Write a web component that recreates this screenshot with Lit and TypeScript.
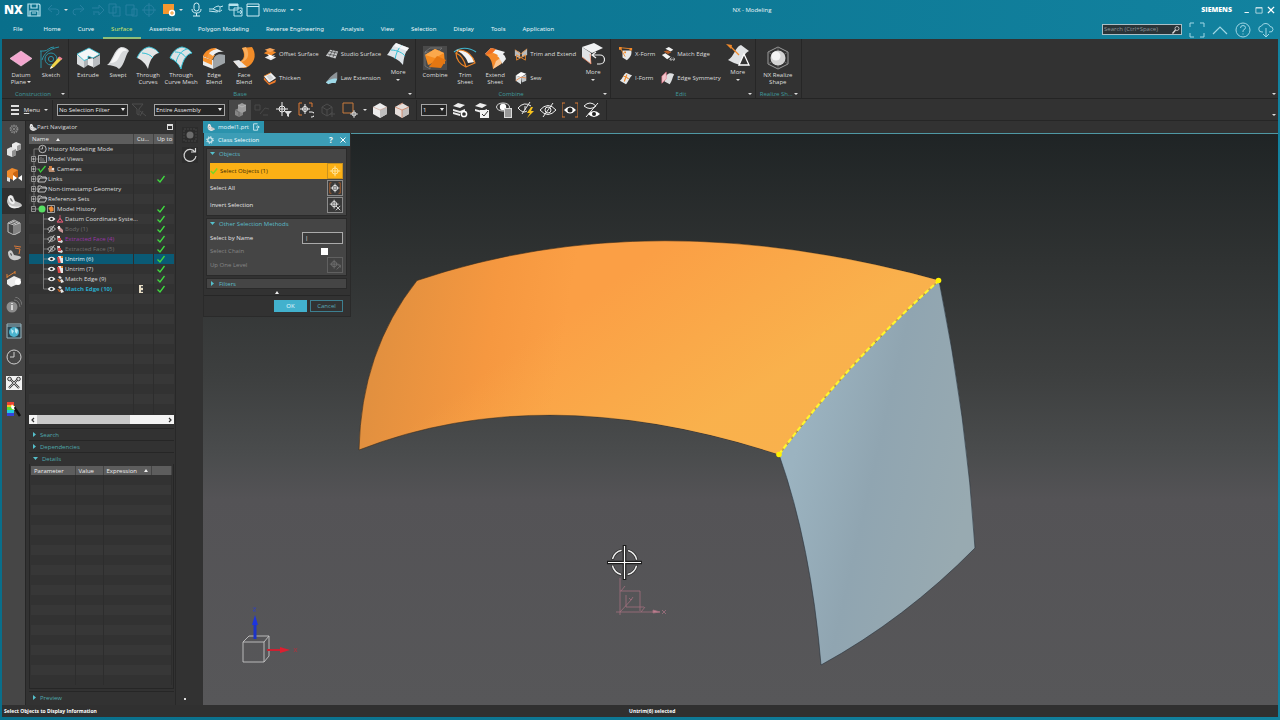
import { LitElement, html, svg, css, nothing, type SVGTemplateResult } from "lit";
import { customElement } from "lit/decorators.js";
import { classMap } from "lit/directives/class-map.js";

type Art = SVGTemplateResult;

const ART: Record<string, Art> = {
  // ---- ribbon, large (24 x 24)
  datum: svg`<path d="M1 12.500 12 5l11 7.500L12 20z" fill="#f3a6cf" stroke="#fbd3e8" stroke-width=".6"/>`,
  sketch: svg`<g fill="none" stroke="#2b93a6" stroke-width="1"><path d="M2 22V5M1 5h4c4 0 5-4 10-4M3 14C5 8 9 3 20 1"/><circle cx="12" cy="13" r="6"/><circle cx="12" cy="13" r="2.600"/></g><path d="m11 23 2-4 7-8 3 2-8 8z" fill="#f2d548"/><path d="m19 12 1.500-1.500 3 2L22 14z" fill="#ef7f9a"/><path d="m11 23 1-3 2 1.500z" fill="#fff"/>`,
  extrude: svg`<path d="M1 8v10l7 4V14z" fill="#d9dcde"/><path d="M8 14v8l4-3v-6z" fill="#aeb3b7"/><path d="M12 13v6l5 2v-9z" fill="#eceeef"/><path d="m17 13 7-4v9l-7 4z" fill="#b9bdc1"/><path d="m1 8 12-6 11 6-7 4-5-2v3l-4 1.500z" fill="#f4f6f7" stroke="#35bfd3" stroke-width=".8"/>`,
  swept: svg`<path d="M1 19C6 16 8 3 15 1c4 0 7 2 8 4-4 4-4 14-10 18-3-3-8-4-12-4z" fill="#d6d8da"/><path d="M4 17C8 13 10 4 15 2c3 0 5 1 6 3-3-1-5 0-7 4-2 5-4 8-10 8z" fill="#f6f6f6"/>`,
  through: svg`<path d="M1 12C4 5 8 2 13 1c4 1 7 2 10 6-5 1-9 6-11 16-2-5-6-9-11-11z" fill="#e3e5e6"/><path d="M1 12C4 5 8 2 13 1c4 1 7 2 10 6M6 7c4 0 9 2 11 5" fill="none" stroke="#35bfd3" stroke-width="1"/>`,
  mesh: svg`<path d="M1 12C4 5 8 2 13 1c4 1 7 2 10 6-5 1-9 6-11 16-2-5-6-9-11-11z" fill="#dde2e4"/><path d="M1 12C4 5 8 2 13 1c4 1 7 2 10 6-5 1-9 6-11 16-2-5-6-9-11-11zM6 6c5 0 9 2 11 6M18 3C12 5 9 9 7 16" fill="none" stroke="#35bfd3" stroke-width="1"/>`,
  edgeblend: svg`<path d="M1 10v9l10 4v-9z" fill="#e9ebec"/><path d="M11 23v-8c1-6 5-8 12-6v8z" fill="#9ea4a8"/><path d="m1 10 4-4 8 3-3 5z" fill="#f79a3c"/><path d="M5 6 13 2l9 4c-5-1-9 1-11 4z" fill="#eef0f1"/><path d="M1 10c2-5 7-8 12-8l2 1C10 4 7 6 5 11z" fill="#f58a25"/><path d="M1 11v4l9 4v-5z" fill="#f7932f"/>`,
  faceblend: svg`<path d="M10 2 20 1c4 6 4 14-3 19-4 3-10 3-15-4 8 1 13-4 8-14z" fill="#f28c28"/><path d="m1 15 6-1 8 7-8 1z" fill="#e5e7e9"/><path d="m10 2 4-1c5 8 1 15-6 15 6-3 6-8 2-14z" fill="#f9ad5c"/>`,
  moresurf: svg`<path d="M1 13C5 8 7 3 10 1l13 5c-4 4-5 9-6 17-4-5-9-8-16-10z" fill="#dde4e9"/><path d="M5 8c6 0 12 3 14 6M16 3c-4 3-6 9-7 14" fill="none" stroke="#35bfd3" stroke-width="1"/><path d="m10 1 13 5-2 3-13-5z" fill="#fff" opacity=".7"/>`,
  combine: svg`<path d="M2 6 7 2h12l-4 4zM2 6v14l5 3V9z" fill="none" stroke="#8a8a8a" stroke-width=".6"/><path d="M2 9 12 3l9 4 1 11-8-3-9 4z" fill="#f68b1f"/><path d="m2 9 10-6 9 4-9 5z" fill="#fba84c"/><path d="m14 10 9 4-5 8-12-1z" fill="#e57712"/>`,
  trim: svg`<path d="M1 6C7 1 16 1 23 6" fill="none" stroke="#3fb6cf" stroke-width="1.200"/><path d="M3 4C11 3 19 8 22 16l-7 1C13 11 9 7 3 4z" fill="#f4f5f5"/><path d="M3 7c5 2 8 6 10 14l9-4c-2-7-8-13-16-13zM3 7c0 6 4 12 10 14" fill="none" stroke="#e98226" stroke-width="1.200"/>`,
  extend: svg`<path d="M2 8 8 2l14 4-6 6z" fill="#f2f3f4"/><path d="m8 2 5 1-6 7-5-2z" fill="#f07022"/><path d="M2 9c5 1 7 6 8 14l9-6c-1-6-4-9-9-10z" fill="#f58a2b"/><path d="m10 23 3-8 6-4-1 7z" fill="#fbc691"/><path d="M14 10c2 1 4 4 5 8l4-5c-1-4-3-5-5-6z" fill="#eceeef"/>`,
  morecomb: svg`<path d="m1 5 12-4 9 5-11 5z" fill="#f0f1f2"/><path d="M1 5v10l9 7V11z" fill="#dfe2e4"/><path d="M1 15 10 22 9 12" fill="none" stroke="#f08b66" stroke-width=".8"/><path d="M12 13h7a4 4 0 0 1 0 9h-3M15 10l-4 3 4 3" fill="none" stroke="#eee" stroke-width="1.200"/>`,
  moreedit: svg`<path d="M2 18C8 15 9 5 15 3l8 6c-5 2-6 9-9 14-4-1-8-3-12-5z" fill="#dfe1e3"/><path d="m0 2 6 1-1 4z" fill="#f28a2a"/><path d="m4 4 9 9" stroke="#f28a2a" stroke-width="1.200"/><path d="m18 12-5 11h10z" fill="#333" stroke="#fff" stroke-width="1.300"/>`,
  realize: svg`<path d="M12 1 22 6v12l-10 5L2 18V6z" fill="none" stroke="#9a9a9a" stroke-width="1"/><path d="M12 1v22M2 6l20 12M22 6 2 18" stroke="#777" stroke-width=".7"/><circle cx="12" cy="12" r="7.500" fill="#d3d3d3"/><circle cx="10" cy="10" r="4.500" fill="#f4f4f4"/>`,
  // ---- ribbon, small (16 x 16)
  offset: svg`<path d="m2 12 6-3 7 3-6 3z" fill="#e6e8ea"/><path d="m1 7 6-4 8 3-6 4z" fill="#f28a2a"/><path d="m2 3 6-2 6 2-6 3z" fill="#f7a45a"/><path d="m5 8 6 2 3-1-5 4z" fill="#fff"/>`,
  thicken: svg`<path d="m1 7 6 7 8-4-1 3-7 3-6-6z" fill="#f07b2a"/><path d="m1 6 8-4 6 6-8 5z" fill="#f1f2f3"/><path d="m4 6 4-2 4 4-4 3z" fill="#d0d3d5"/><path d="m1 6 8-4" stroke="#f28a2a"/>`,
  studio: svg`<path d="M1 10 6 3l9 2-3 8z" fill="#c9cbcd"/><path d="m3 8 10 2M5 5l9 2M9 3l-4 8M12 4 9 12" stroke="#444" stroke-width=".8"/>`,
  law: svg`<path d="M14 1v8c-3 0-7 1-11 5l-2-1C4 9 9 3 14 1z" fill="#8d9397"/><path d="M1 13c5-4 9-5 13-4l-2 5c-3-1-6 0-8 1z" fill="#9fd9e8"/>`,
  trimext: svg`<path d="m1 3 6 3v7L1 10zM15 2 9 6v6l6-3z" fill="#b9bcbf"/><path d="M3 9v6l5-3 5 3V9L8 12z" fill="none" stroke="#f28a2a" stroke-width="1"/><path d="m1 3 7 5 7-6" fill="none" stroke="#f28a2a" stroke-width=".8"/>`,
  sew: svg`<path d="m2 5 6-4 6 2-6 4z" fill="#fff"/><path d="m2 5 6 2v8l-6-4z" fill="#dcdfe1"/><path d="m8 7 6-3v7l-5 2z" fill="#bfc4c7"/><path d="m2 11 6-4 6 1" fill="none" stroke="#f08b4a"/>`,
  xform: svg`<path d="M4 4 14 4c1 4-1 8-5 11L4 12z" fill="#e6e7e8"/><path d="M1 1h3l9 1M2 2l5 9" stroke="#f28a2a" fill="none"/><path d="M0 0h3v3H0zM12 1h3v3h-3zM6 5h2v2H6z" fill="#f28a2a"/>`,
  iform: svg`<path d="M1 11C4 9 5 4 8 2l7 3c-3 2-4 7-7 10z" fill="#e6e7e8"/><path d="M5 6c3 0 4 1 6 3M9 4 6 12" stroke="#f28a2a" stroke-width="1.300" fill="none"/>`,
  matchedge: svg`<path d="m5 2 4-2 5 3-3 2zM1 9l4-2 6 4-4 3z" fill="#f3f4f4"/><path d="m3 5 4-1 5 2-4 2z" fill="#b9612a"/><path d="M10 14h6M12 12l-2 2 2 2M14 12l2 2-2 2" stroke="#ddd" fill="none" stroke-width=".8"/>`,
  symmetry: svg`<path d="M6 5c3-3 6-3 9-1-2 3-2 7-5 11L4 12z" fill="#dcdedf"/><path d="M1 6 6 1v8l-5 5z" fill="#f2c5cb" stroke="#e8748a" stroke-width=".7"/>`,
  // ---- selection bar (16 x 16)
  filter: svg`<path d="M1 2h11L8 7v6L6 12V7zM9 9l6 5M12 9l-3 5" fill="none" stroke="#4d4d4d"/>`,
  bodies: svg`<path d="m3 8 4-2 4 2v5l-4 2-4-2z" fill="#858585"/><path d="m3 8 4 2 4-2M7 10v5" fill="none" stroke="#6a6a6a"/><path d="m6 3 4-2 4 2v6l-4 2-4-2z" fill="#9d9d9d"/><path d="m6 3 4 2 4-2" fill="none" stroke="#b5b5b5"/>`,
  dimlink: svg`<path d="M1 3h5v5H1zM6 12l5-6 4 1M9 13h5" fill="none" stroke="#484848"/>`,
  snap: svg`<circle cx="6" cy="7" r="3" fill="none" stroke="#eee"/><path d="M6 0v14M0 7h12" stroke="#eee"/><path d="M8 9h8l-3 3v3l-2-1v-2z" fill="#ddd"/>`,
  snaparea: svg`<path d="M4 1H1v12h3M11 1h3v4" stroke="#e07b35" fill="none"/><circle cx="7" cy="7" r="2.500" fill="none" stroke="#eee"/><path d="M7 2v10M2 7h10M11 10h3a2 2 0 0 1 0 5h-1" stroke="#eee" fill="none"/>`,
  dimcube: svg`<path d="m2 5 5-3 5 3v6l-5 3-5-3zM2 5l5 3 5-3M7 8v6M12 10v5M10 12h5" fill="none" stroke="#4d4d4d"/>`,
  rectsel: svg`<path d="M1 1h10v10H1z" fill="none" stroke="#c87a3c"/><circle cx="12" cy="12" r="2" fill="none" stroke="#ddd"/><path d="M12 8v8M8 12h8" stroke="#ddd" stroke-width=".8"/>`,
  cube: svg`<path d="m1 5 7-4 7 4v7l-7 4-7-4z" fill="#ececec"/><path d="m8 8 7-3v7l-7 4z" fill="#bdbdbd"/><path d="m1 5 7 3 7-3" fill="none" stroke="#c98" stroke-width=".6"/>`,
  cubeface: svg`<path d="m1 5 7-4 7 4v7l-7 4-7-4z" fill="#e5dedb"/><path d="m8 8 7-3v7l-7 4z" fill="#c3bfbd"/><path d="m1 5 7 3 7-3M8 8v8M5 3l4-2" fill="none" stroke="#d0805f" stroke-width=".8"/>`,
  layergear: svg`<path d="m1 4 5-3 7 2-5 3zM1 7l7 2 5-2v2l-5 2-7-2zM1 10l7 2v2l-7-2z" fill="#eee"/><circle cx="12" cy="12" r="2.600" fill="#333" stroke="#fff" stroke-width="1.500"/>`,
  layercheck: svg`<path d="m1 4 5-3 7 2-5 3zM1 7l7 2 5-2v2l-5 2-7-2z" fill="#eee"/><path d="M6 8h9v8H6z" fill="#f3f3f3"/><path d="m8 12 2 2 4-5" stroke="#333" fill="none"/>`,
  eyelist: svg`<ellipse cx="7" cy="5" rx="6.500" ry="4" fill="none" stroke="#ddd"/><circle cx="7" cy="5" r="3.200" fill="#fff"/><path d="M8 6h8v10H8z" fill="#ddd"/><path d="M9 8h6M9 10h6M9 12h6M9 14h6" stroke="#333" stroke-width=".8"/>`,
  eyeflash: svg`<path d="M0 6q6-7 13-2M0 6q5 6 9 3M4 12 12 0M7 4v4" stroke="#eee" fill="none"/><path d="m13 5-4 6h3l-3 5 7-7h-3l2-4z" fill="#f7c21e"/>`,
  eyeslash: svg`<path d="M0 8q8-9 16 0-8 9-16 0zM3 15 13 1" stroke="#eee" fill="none"/><circle cx="8" cy="8" r="3" fill="none" stroke="#eee"/>`,
  eyebox: svg`<path d="M3 1H0v14h3M13 1h3v14h-3" fill="none" stroke="#d77a35"/><path d="M2 8q6-7 12 0-6 7-12 0z" fill="#fff"/><circle cx="8" cy="8" r="2.500" fill="#222"/>`,
  eyeswap: svg`<path d="M0 4q6-6 12 0-6 5-12 0zM2 15 14 1" fill="none" stroke="#eee"/><path d="M4 12q6-6 12 0-6 6-12 0z" fill="#fff"/><circle cx="10" cy="12" r="2" fill="#222"/>`,
  // ---- title bar (16 x 16)
  save: svg`<path d="M2 2h11l1 1v11H2zM5 2v4h6V2M4 14V9h8v5M6 11h4" fill="none" stroke="#b7e3ee" stroke-width="1.200"/>`,
  undo: svg`<path d="M6 3 2 7l4 3M2 7h8a3 3 0 0 1 0 6" fill="none" stroke="#2680a0"/>`,
  redo: svg`<path d="m10 3 4 4-4 3M14 7H6a3 3 0 0 0 0 6" fill="none" stroke="#2680a0"/>`,
  cut: svg`<path d="M2 6h7V3l5 5-5 5v-3H5M4 9v4" fill="none" stroke="#2680a0"/>`,
  copy: svg`<path d="M2 2h7v9H2zM6 5h7v9H6z" fill="none" stroke="#2680a0"/>`,
  paste: svg`<path d="M2 3h8v10H2zM8 7h5v7H8z" fill="none" stroke="#2680a0"/>`,
  target: svg`<circle cx="8" cy="8" r="5" fill="none" stroke="#2680a0"/><path d="M8 1v14M1 8h14" stroke="#2680a0"/>`,
  swatch: svg`<path d="M2 2h11v10H2z" fill="#f6972f"/><circle cx="11" cy="11" r="3.200" fill="#fff"/><path d="M11 9v4M9 11h4" stroke="#f6972f"/>`,
  mic: svg`<rect x="6" y="1" width="5" height="8" rx="2.500" fill="none" stroke="#d6eff5"/><path d="M4 7q0 4 4.500 4T13 7M8.500 11v3M5 14h7" fill="none" stroke="#d6eff5"/>`,
  touch: svg`<path d="M1 7h4M1 9l8 1c3-1 4-4 2-6C8 4 6 6 5 7l5 2M12 5l3-1M11 10l3-2" fill="none" stroke="#c3e6ef"/>`,
  switchwin: svg`<path d="M1 2h9v6H1zM6 6h8v8H6z" fill="none" stroke="#b7e3ee"/><path d="M1 2h9v2H1z" fill="#b7e3ee"/><path d="M9 10h5M12 8l2 2-2 2" stroke="#b7e3ee" fill="none"/>`,
  windows: svg`<path d="M2 2h12v12H2zM2 4.500h12" fill="none" stroke="#d0edf4"/>`,
  min: svg`<path d="M4 12h7" stroke="#fff" stroke-width="1.500"/>`,
  max: svg`<path d="M3 4h10v9H3zM3 5h10" fill="none" stroke="#fff"/>`,
  close: svg`<path d="m3 3 10 10M13 3 3 13" stroke="#fff" stroke-width="2"/>`,
  full: svg`<path d="M1 5V1h4M11 1h4v4M15 11v4h-4M5 15H1v-4" fill="none" stroke="#9fd6e4"/>`,
  up: svg`<path d="m1 12 7-7 7 7" fill="none" stroke="#9fd6e4" stroke-width="1.200"/>`,
  help: svg`<circle cx="8" cy="8" r="7" fill="none" stroke="#9fd6e4"/><path d="M5.500 6q0-2.500 2.500-2.500t2.500 2.200Q10.500 7 8 8.500V10M8 11.500v1" fill="none" stroke="#9fd6e4"/>`,
  cloud: svg`<path d="M5 10H4a3 3 0 0 1-.5-6Q5 1 8 1.500q3 0 4 3 3 0 3 3T11 10M8 6v9M5 12l3 3 3-3" fill="none" stroke="#9fd6e4"/>`,
  // ---- resource bar (16 x 16)
  gear: svg`<circle cx="8" cy="8" r="6" fill="none" stroke="#8f8f8f" stroke-width="2" stroke-dasharray="2.400 1.370"/><circle cx="8" cy="8" r="4" fill="none" stroke="#999"/><circle cx="8" cy="8" r="1.500" fill="#999"/>`,
  asm: svg`<path d="m6 3 4-2 5 2v5l-4 2-5-2z" fill="#ececec"/><path d="m11 5 4-2v5l-4 2z" fill="#9c9c9c"/><path d="m1 8 4-2 5 2v6l-4 2-5-2z" fill="#e2e2e2"/><path d="m6 10 4-2v6l-4 2z" fill="#8f8f8f"/>`,
  constraint: svg`<path d="m1 4 5-3 6 2v7l-5 3-6-3z" fill="#f08a2c"/><path d="m7 6 5-3v7l-5 3z" fill="#c96411"/><path d="m7 8 4 3-4 3zM16 8l-4 3 4 3z" fill="#fff"/><path d="m1 10 3 1v4l-3-1z" fill="#ddd"/>`,
  part: svg`<path d="M2 4q2-3 5-1l2 5 5 2q2 1 2 3-4 3-9 2-6-2-6-7z" fill="#c4c4c4"/><path d="M2 4q2-3 4-1l3 6q-1 3-3 2Q2 9 2 4z" fill="#f0f0f0"/><path d="M4 5q2 0 3 4-3-1-3-4z" fill="#777"/><path d="M2 11q6 4 13 2-4 3-9 2-3-1-4-4z" fill="#efefef"/>`,
  reuse: svg`<path d="m2 4 6-3 6 3v9l-6 3-6-3zM2 4l6 2 6-2M8 6v10M4 3l6 2v10M6 2l6 2v10" fill="none" stroke="#bdbdbd"/>`,
  view: svg`<path d="M2 7q2-3 4-1l2 4 5 1q2 0 2 2-4 3-8 2-5-1-5-8z" fill="#c9c9c9"/><path d="M4 8q2 0 2 3-2-1-2-3z" fill="#555"/><path d="m9 3 5 1-1 5M8 1l7 1" stroke="#d6783a" fill="none"/>`,
  mbd: svg`<path d="m1 9 7-4 7 3-3 5-7 3-4-3z" fill="#ececec"/><circle cx="12" cy="11" r="3" fill="#fff"/><path d="M1 6 9 1M1 3v4M9 0v3" stroke="#e08033" fill="none"/>`,
  info: svg`<circle cx="6" cy="10" r="5.500" fill="#8d8d8d"/><path d="M6 8v5M6 6v1" stroke="#eee" stroke-width="1.500"/><path d="M8 3q5 0 6 7M9 0q6 1 7 8" fill="none" stroke="#777"/>`,
  globe: svg`<path d="M1 1h14v14H1z" fill="#2b4450" stroke="#9ab6bf" stroke-width="1"/><path d="M1 3h14" stroke="#9ab6bf"/><circle cx="8" cy="9" r="5" fill="#4bb4cf"/><path d="m5 6 3 2-2 3zM9 5l3 2-1 4-2-2z" fill="#bfeaf4"/>`,
  clock: svg`<circle cx="8" cy="8" r="7" fill="none" stroke="#cfcfcf"/><path d="M8 3v5H4" fill="none" stroke="#cfcfcf"/>`,
  tools: svg`<path d="M0 1h16v14H0z" fill="#f2f2f2"/><path d="m4 4 9 9M12 4l-9 9" stroke="#3b3b3b" stroke-width="2.200"/><path d="m4 4 9 9M12 4l-9 9" stroke="#ddd" stroke-width=".8"/><circle cx="3.500" cy="4" r="1.800" fill="#ddd" stroke="#3b3b3b"/><circle cx="12.500" cy="4" r="1.800" fill="#ddd" stroke="#3b3b3b"/>`,
  palette: svg`<path d="M1 1h7v3H1z" fill="#e43"/><path d="M1 4h7v2H1z" fill="#fb2"/><path d="M1 6h7v3H1z" fill="#5d3"/><path d="M1 9h7v3H1z" fill="#2cd"/><path d="M1 12h7v3H1z" fill="#34d"/><path d="m8 6 6 9" stroke="#111" stroke-width="2.500"/><path d="m6 3 1 2 2 0-1 2 1 2-3-1-1-2z" fill="#fff"/>`,
  record: svg`<path d="M2 2h12v12H2z" fill="none" stroke="#444" stroke-dasharray="2 1"/><circle cx="8" cy="8" r="3.500" fill="#6c6c6c"/>`,
  refresh: svg`<path d="M13 5a6 6 0 1 0 1 4M9 5h4.500V1" fill="none" stroke="#d5d5d5" stroke-width="1.200"/>`,
  // ---- dialog (16 x 16)
  cross: svg`<circle cx="8" cy="8" r="3.500" fill="none" stroke="currentColor"/><path d="M8 2v12M2 8h12" stroke="currentColor"/>`,
  crossall: svg`<path d="M4 2H2v12h2M12 2h2v12h-2" fill="none" stroke="#b0602c"/><circle cx="8" cy="8" r="3" fill="none" stroke="#eee"/><path d="M8 3v10M3 8h10" stroke="#eee"/>`,
  crossinv: svg`<circle cx="7" cy="7" r="3" fill="none" stroke="#eee"/><path d="M7 2v10M2 7h10M9 9l5 5M14 9l-5 5" stroke="#eee"/>`,
  uplevel: svg`<circle cx="7" cy="7" r="3" fill="none" stroke="#707070"/><path d="M7 2v10M2 7h10M10 13l4-4M11 8h3v3" stroke="#707070" fill="none"/>`,
  cog: svg`<circle cx="8" cy="8" r="4.500" fill="none" stroke="#fff" stroke-width="2"/><circle cx="8" cy="8" r="6.500" fill="none" stroke="#fff" stroke-width="2" stroke-dasharray="2.500 2.600"/>`,
  lens: svg`<circle cx="10" cy="5" r="4" fill="none" stroke="#ddd" stroke-width="1.500"/><path d="M7 8 1 15" stroke="#ddd" stroke-width="2.500"/>`,
};

const icon = (name: string, box = 16, cls = "i16") =>
  html`<svg class=${cls} viewBox="0 0 ${box} ${box}" aria-hidden="true">${ART[name]}</svg>`;

const base = css`
  * { box-sizing: border-box; }
  button, input, select {
    font: inherit; color: inherit; background: none; border: 0; padding: 0; margin: 0; border-radius: 0;
  }
  button { display: flex; align-items: center; justify-content: center; }
  svg { display: block; flex: none; }
  .i8 { width: 8px; height: 8px; }
  .i10 { width: 10px; height: 10px; }
  .i12 { width: 12px; height: 12px; }
  .i14 { width: 14px; height: 14px; }
  .i16 { width: 16px; height: 16px; }
  .i24 { width: 24px; height: 24px; }
  .down { width: 0; height: 0; border: 2px solid transparent; border-top-color: #ddd; border-bottom: 0; }
  .pick { position: relative; display: block; }
  .pick::after {
    content: ""; position: absolute; right: 3px; top: 4px;
    border: 2px solid transparent; border-top: 3px solid #eee; border-bottom: 0; pointer-events: none;
  }
  .pick select {
    display: block; width: 100%; height: 12px; appearance: none; border: 1px solid #a5a5a5;
    background: #262626; color: #e8e8e8; padding: 0 1px; line-height: 10px;
  }
`;

@customElement("title-bar")
class TitleBar extends LitElement {
  static styles = [base, css`
    :host { display: block; color: #eaf6f9; }
    .top { display: grid; grid-template-columns: auto 1fr auto; align-items: center; height: 20px; }
    .quick { display: flex; align-items: center; gap: 1px; }
    .nx { font-size: 12px; line-height: 14px; font-weight: 800; width: 23px; padding-left: 2px; color: #fff; }
    .sep { width: 2px; }
    .dd { width: 6px; }
    .win { font-size: 6px; gap: 2px; }
    .win .down { margin: 0 2px; }
    .end { display: flex; align-items: center; justify-content: flex-end; gap: 2px; padding-right: 2px; }
    .brand { font-size: 7px; font-weight: 800; color: #fff; padding-right: 8px; }
    .title { font-size: 6px; text-align: center; }
    .bar { display: flex; align-items: center; height: 19px; }
    .tabs { display: flex; height: 100%; flex: 1; }
    .tab { font-family: "Noto Sans", sans-serif; font-size: 6px; padding: 0 9px 0 8px; border-bottom: 2px solid transparent; }
    .tab.file { padding: 0 13px 0 11px; }
    .tab.on { color: #cfe06a; border-color: #8fbf78; }
    .find { display: flex; align-items: center; width: 80px; height: 11px; border: 1px solid #a9bfc6; background: #2b3438; padding: 0 1px; }
    .find input { flex: 1; min-width: 0; font-size: 6px; line-height: 9px; outline: 0; }
    .find input::placeholder { color: #8b979b; opacity: 1; }
    .aids { display: flex; gap: 7px; padding: 0 4px 0 7px; }
  `];
  render() {
    const quick = ["save", "|", "undo", ".", "redo", "|", "cut", "copy", "paste", "target", "|", "swatch", ".", "|", "mic", "|", "touch", "|", "switchwin"];
    const tabs = ["Home", "Curve", "Surface", "Assemblies", "Polygon Modeling", "Reverse Engineering", "Analysis", "View", "Selection", "Display", "Tools", "Application"];
    return html`
      <div class="top">
        <div class="quick">
          <span class="nx">NX</span>
          ${quick.map((q) => q === "|" ? html`<span class="sep"></span>`
            : q === "." ? html`<button class="dd" aria-label="More"><span class="down"></span></button>`
            : html`<button aria-label=${q}>${icon(q)}</button>`)}
          <button class="win">${icon("windows")}<span>Window</span><span class="down"></span></button>
          <button class="dd" aria-label="Customize"><span class="down"></span></button>
        </div>
        <span class="title">NX - Modeling</span>
        <div class="end">
          <span class="brand">SIEMENS</span>
          <button aria-label="Minimize">${icon("min", 16, "i10")}</button>
          <button aria-label="Maximize">${icon("max", 16, "i10")}</button>
          <button aria-label="Close">${icon("close", 16, "i10")}</button>
        </div>
      </div>
      <div class="bar">
        <nav class="tabs">
          <button class="tab file">File</button>
          ${tabs.map((t) => html`<button class=${classMap({ tab: true, on: t === "Surface" })}>${t}</button>`)}
        </nav>
        <label class="find"><input type="search" aria-label="Search" placeholder="Search (Ctrl+Space)">${icon("lens", 16, "i8")}</label>
        <div class="aids">
          ${["full", "up", "help", "cloud"].map((n) => html`<button aria-label=${n}>${icon(n)}</button>`)}
        </div>
      </div>`;
  }
}

type Big = { k: string; t: string; dd?: boolean; more?: boolean; hot?: boolean; wide?: boolean };
type Col = { rows: [string, string][] };
type Group = { title: string; items: (Big | Col)[] };

const GROUPS: Group[] = [
  { title: "Construction", items: [{ k: "datum", t: "Datum Plane", dd: true }, { k: "sketch", t: "Sketch" }] },
  { title: "Base", items: [
    { k: "extrude", t: "Extrude" }, { k: "swept", t: "Swept" }, { k: "through", t: "Through Curves" },
    { k: "mesh", t: "Through Curve Mesh", wide: true }, { k: "edgeblend", t: "Edge Blend" }, { k: "faceblend", t: "Face Blend" },
    { rows: [["offset", "Offset Surface"], ["thicken", "Thicken"]] },
    { rows: [["studio", "Studio Surface"], ["law", "Law Extension"]] },
    { k: "moresurf", t: "More", more: true }] },
  { title: "Combine", items: [
    { k: "combine", t: "Combine", hot: true }, { k: "trim", t: "Trim Sheet" }, { k: "extend", t: "Extend Sheet" },
    { rows: [["trimext", "Trim and Extend"], ["sew", "Sew"]] }, { k: "morecomb", t: "More", more: true }] },
  { title: "Edit", items: [
    { rows: [["xform", "X-Form"], ["iform", "I-Form"]] }, { rows: [["matchedge", "Match Edge"], ["symmetry", "Edge Symmetry"]] },
    { k: "moreedit", t: "More", more: true }] },
  { title: "Realize Sh...", items: [{ k: "realize", t: "NX Realize Shape", wide: true }] },
];

@customElement("ribbon-panel")
class RibbonPanel extends LitElement {
  static styles = [base, css`
    :host { display: flex; height: 60px; background: #323232; color: #dedede; font-size: 6px; line-height: 7px; border-bottom: 1px solid #242424; }
    .group { display: flex; flex-direction: column; border-right: 1px solid #262626; padding: 0 2px 0 4px; }
    .items { display: flex; flex: 1; }
    .foot { display: grid; grid-template-columns: 1fr 6px; align-items: center; height: 8px; color: #3f9a9c; }
    .foot span:nth-child(1) { text-align: center; white-space: nowrap; }
    .foot .down { margin-left: 1px; }
    .big { width: 30px; flex-direction: column; justify-content: flex-start; padding-top: 7px; gap: 2px; }
    .big.wide { width: 36px; }
    .big.more { padding-top: 3px; gap: 3px; }
    .hot svg { background: #4a4a4a; }
    .big span.cap { text-align: center; }
    .cap .down { display: inline-block; vertical-align: middle; margin-left: 1px; }
    .col { display: flex; flex-direction: column; gap: 8px; padding: 7px 2px 0 4px; }
    .row { justify-content: flex-start; gap: 2px; height: 16px; white-space: nowrap; }
    .rest { flex: 1; display: flex; justify-content: flex-end; align-items: flex-end; padding: 0 2px 3px; }
  `];
  item(it: Big | Col) {
    if ("rows" in it) return html`<div class="col">${it.rows.map(([k, t]) => html`<button class="row">${icon(k, 16, "i14")}${t}</button>`)}</div>`;
    return html`<button class=${classMap({ big: true, wide: !!it.wide, more: !!it.more, hot: !!it.hot })}>
      ${icon(it.k, 24, "i24")}
      <span class="cap">${it.t}${it.dd ? html`<i class="down"></i>` : nothing}</span>
      ${it.more ? html`<i class="down"></i>` : nothing}</button>`;
  }
  render() {
    return html`${GROUPS.map((g) => html`<section class="group" aria-label=${g.title}>
        <div class="items">${g.items.map((i) => this.item(i))}</div>
        <div class="foot"><span>${g.title}</span><span class="down"></span></div>
      </section>`)}<div class="rest"><span class="down"></span></div>`;
  }
}

@customElement("selection-bar")
class SelectionBar extends LitElement {
  static styles = [base, css`
    :host { display: flex; align-items: center; height: 22px; background: #323232; color: #e2e2e2; font-size: 6px; border-bottom: 1px solid #262626; }
    .menu { gap: 5px; padding: 0 4px 0 9px; border-right: 1px solid #262626; height: 20px; width: 51px; justify-content: flex-start; }
    .lines { width: 10px; height: 10px; background: repeating-linear-gradient(#ddd 0 2px, transparent 2px 4px); }
    .menu .down { margin-left: -1px; }
    .w71 { width: 71px; margin-left: 4px; }
    .w26 { width: 26px; margin-left: 4px; margin-right: 2px; }
    .tool { width: 22px; height: 20px; }
    .tool.on { background: #474747; }
    .sep { width: 1px; height: 20px; background: #262626; margin-left: 3px; }
    .dd { width: 8px; }
    .rest { flex: 1; display: flex; justify-content: flex-end; align-self: flex-end; padding: 0 2px 4px; }
  `];
  render() {
    const tool = (n: string) => html`<button class=${classMap({ tool: true, on: n === "bodies" })} aria-label=${n}>${icon(n)}</button>`;
    return html`
      <button class="menu"><span class="lines"></span><span><u>M</u>enu</span><span class="down"></span></button>
      <label class="pick w71"><select aria-label="Type filter"><option>No Selection Filter</option></select></label>
      ${tool("filter")}
      <label class="pick w71"><select aria-label="Selection scope"><option>Entire Assembly</option></select></label>
      <span class="sep"></span>
      ${["bodies", "dimlink", "snap", "snaparea", "dimcube", "rectsel"].map(tool)}
      <button class="dd" aria-label="More"><span class="down"></span></button>
      ${["cube", "cubeface"].map(tool)}
      <span class="sep"></span>
      <label class="pick w26"><select aria-label="Work layer"><option>1</option></select></label>
      ${["layergear", "layercheck", "eyelist", "eyeflash", "eyeslash", "eyebox", "eyeswap"].map(tool)}
      <span class="sep"></span>
      <div class="rest"><span class="down"></span></div>`;
  }
}

type Row = { t: string; lv: 0 | 1; two?: boolean; art: Art; ok?: boolean; tone?: string; mark?: boolean };
const plus = svg`<path d="M34 0v10M34 5h6" stroke="#8c8c8c" stroke-width=".7"/><path d="M31.500 2.500h4v5h-4z" fill="#323232" stroke="#aaa" stroke-width=".8"/><path d="M32 5h3M33.500 3.500v3" stroke="#ccc" stroke-width=".7"/>`;
const folder = svg`${plus}<path d="M38 2h3l1 1h4v2M38 2v6h7l2-4h-7l-2 4" fill="none" stroke="#ccc" stroke-width=".9"/>`;
const branch = svg`<path d="M43.500 0v10M43.500 5h4" stroke="#8c8c8c" stroke-width=".8"/>`;
const eye = svg`<path d="M47.500 5q4-4.500 8 0-4 4.500-8 0z" fill="#eee"/><circle cx="51.500" cy="5" r="1.300" fill="#222"/>`;
const hid = svg`<path d="M47.500 5q4-4.500 8 0-4 4.500-8 0zM48.500 9l6-8" fill="none" stroke="#ccc" stroke-width=".9"/><circle cx="51.500" cy="5" r="1.300" fill="#aaa"/>`;
const face = svg`<path d="M57 2h3v3l3 2-1 2-4-1z" fill="#ddd"/><path d="M58 4h3v3h-3z" fill="#d4494a"/>`;
const untrim = svg`<path d="M58 2h3l2 1v6h-3z" fill="#e8e8e8"/><path d="M57 3h2l2 6h-3z" fill="#d4494a"/><path d="M61 2h2v2h-2z" fill="#e58a3a"/>`;
const match = svg`<path d="m58 3 2-1 2 2-2 1zM60 6l2-1 2 3-3 1z" fill="#e8e8e8"/><path d="m57 5 2 0 2 3-2 0z" fill="#b9612a"/>`;

const TREE: Row[] = [
  { t: "History Modeling Mode", lv: 0, art: svg`<path d="M34 10V5h4" fill="none" stroke="#8c8c8c" stroke-width=".8"/><circle cx="42.500" cy="5" r="3.700" fill="none" stroke="#ccc" stroke-width=".9"/><path d="M42.500 2.500V5h-2" fill="none" stroke="#ccc" stroke-width=".8"/>` },
  { t: "Model Views", lv: 0, art: svg`${plus}<path d="M38.500 1.500h8v7h-8z" fill="none" stroke="#bbb" stroke-width=".9"/><path d="M40 7h5M41 3v3M43 4v2" stroke="#999" stroke-width=".8"/>` },
  { t: "Cameras", lv: 0, two: true, art: svg`${plus}<path d="m38.500 5 2 3 5-6" fill="none" stroke="#3bd23b" stroke-width="1.300"/><path d="M48 4h5l2 4h-6z" fill="#b98a6b"/><path d="M49 2h3v3h-3z" fill="#d07c3e"/><circle cx="53" cy="5" r="1.300" fill="#ddd"/>` },
  { t: "Links", lv: 0, art: folder, ok: true },
  { t: "Non-timestamp Geometry", lv: 0, art: folder },
  { t: "Reference Sets", lv: 0, art: folder },
  { t: "Model History", lv: 0, two: true, ok: true, art: svg`<path d="M34 0v5h5" fill="none" stroke="#8c8c8c" stroke-width=".8"/><path d="M31.500 2.500h4v5h-4z" fill="#323232" stroke="#aaa" stroke-width=".8"/><path d="M32 5h3" stroke="#ccc" stroke-width=".7"/><circle cx="42" cy="5" r="3.500" fill="#58e063"/><path d="M47.500 1.500h7v7h-7z" fill="none" stroke="#bbb" stroke-width=".8"/><path d="m48.500 4 3-2 2 2v3l-3 1z" fill="#ee8a35"/>` },
  { t: "Datum Coordinate Syste...", lv: 1, ok: true, art: svg`${branch}${eye}<path d="M60 1v4l-3 3h6l-3-3M57 8l3-4 3 4z" fill="none" stroke="#d2566f" stroke-width=".9"/>` },
  { t: "Body (1)", lv: 1, ok: true, tone: "dim", art: svg`${branch}${hid}<path d="M57 3h3l3 3v3l-4-2z" fill="#c99"/><path d="M58 2h2v3h-2z" fill="#e8e8e8"/>` },
  { t: "Extracted Face (4)", lv: 1, ok: true, tone: "violet", art: svg`${branch}${hid}${face}` },
  { t: "Extracted Face (5)", lv: 1, ok: true, tone: "dim", art: svg`${branch}${hid}${face}` },
  { t: "Untrim (6)", lv: 1, ok: true, tone: "sel", art: svg`${branch}${eye}${untrim}` },
  { t: "Untrim (7)", lv: 1, ok: true, art: svg`${branch}${eye}${untrim}` },
  { t: "Match Edge (9)", lv: 1, ok: true, art: svg`${branch}${eye}${match}` },
  { t: "Match Edge (10)", lv: 1, ok: true, tone: "cur", mark: true, art: svg`<path d="M43.500 0v5h4" fill="none" stroke="#8c8c8c" stroke-width=".8"/>${eye}${match}` },
];

@customElement("part-navigator")
class PartNavigator extends LitElement {
  static styles = [base, css`
    :host { display: flex; flex-direction: column; background: #323232; color: #dcdcdc; font-size: 6px; line-height: 8px; padding: 0 1px 0 3px; border-left: 1px solid #262626; min-height: 0; }
    header { display: flex; align-items: center; height: 13px; padding-bottom: 1px; }
    header h2 { font: inherit; margin: 0; flex: 1; }
    header button { padding-right: 1px; }
    .pin { width: 6px; height: 6px; border: 1px solid #ddd; border-top-width: 2px; }
    table { border-collapse: collapse; table-layout: fixed; width: 100%; }
    th { height: 10px; padding: 0 0 0 3px; background: #5d5d5d; text-align: left; font-weight: 400; color: #eee; border-right: 1px solid #444; white-space: nowrap; overflow: hidden; }
    td { height: 10px; padding: 0; border-right: 1px solid #2d2d2d; }
    tr:nth-child(even) td { background: #373737; }
    .c20 { width: 20px; } .c28 { width: 28px; } .c44 { width: 44px; } .c48 { width: 48px; }
    .name { display: flex; height: 10px; align-items: center; white-space: nowrap; padding-left: 2px; }
    .name svg, .tick { height: 10px; }
    .tick { width: 10px; margin-left: 2px; }
    .dim { color: #6f6f6f; } .violet { color: #9a35a8; } .cur { color: #29a9c9; font-weight: 700; }
    tr.sel td { background: #0a5a75; color: #e6f6fb; }
    tbody tr:nth-child(n) td:nth-child(3) { border-right: 0; }
    .asc { display: inline-block; border: 2px solid transparent; border-bottom: 3px solid #eee; border-top: 0; margin-left: 7px; vertical-align: middle; }
    .scroll { display: flex; align-items: center; height: 9px; background: #f4f4f4; margin-top: 1px; }
    .scroll button { width: 8px; height: 9px; }
    .track { flex: 1; height: 100%; }
    .thumb { display: block; width: 72%; height: 100%; background: #c9c9c9; }
    .fold { border-top: 1px solid #262626; height: 12px; justify-content: flex-start; gap: 4px; padding-left: 4px; color: #4fa9ad; font-size: 6px; width: 100%; flex: none; }
    .first { margin-top: 4px; }
    .tri { width: 3px; height: 5px; background: #55c0cc; clip-path: polygon(0 0, 100% 50%, 0 100%); }
    .tri.open { width: 5px; height: 3px; clip-path: polygon(0 0, 100% 0, 50% 100%); }
    .details { flex: 1; min-height: 0; overflow: hidden; border: 1px solid #262626; border-top: 0; padding: 2px 1px; margin-bottom: 2px; }
    .details th { height: 9px; }
    .preview { margin-bottom: 2px; }
  `];
  render() {
    const tick = html`<svg class="tick" viewBox="0 0 10 10"><path d="m1.500 5.500 2.500 2.500 4.500-6" fill="none" stroke="#3fdc3f" stroke-width="1.300"/></svg>`;
    const arrow = (d: string) => html`<svg class="i8" viewBox="0 0 8 8"><path d=${d} fill="none" stroke="#333" stroke-width="1.200"/></svg>`;
    return html`
      <header>${icon("part", 16, "i8")}<h2>Part Navigator</h2><button aria-label="Undock"><span class="pin"></span></button></header>
      <table>
        <thead><tr><th>Name<i class="asc"></i></th><th class="c20">Cu...</th><th class="c20">Up to</th></tr></thead>
        <tbody>
          ${TREE.map((r) => {
            const w = r.lv ? 34 : r.two ? 26 : 17;
            return html`<tr class=${r.tone ?? ""}>
              <td><span class="name"><svg width=${w} viewBox="31 0 ${w} 10">${r.art}</svg>${r.t}</span></td>
              <td>${r.mark ? html`<svg class="tick" viewBox="0 0 10 10"><path d="M3 1h4v8H3z" fill="#e6dcc4"/><path d="M5 2h2v2H5zM5 6h2v2H5z" fill="#555"/></svg>` : nothing}</td>
              <td>${r.ok ? tick : nothing}</td></tr>`;
          })}
          ${Array.from({ length: 12 }, () => html`<tr><td></td><td></td><td></td></tr>`)}
        </tbody>
      </table>
      <div class="scroll"><button aria-label="Scroll left">${arrow("M5 2 3 4l2 2")}</button><div class="track"><span class="thumb"></span></div><button aria-label="Scroll right">${arrow("m3 2 2 2-2 2")}</button></div>
      <button class="fold first"><span class="tri"></span>Search</button>
      <button class="fold"><span class="tri"></span>Dependencies</button>
      <button class="fold"><span class="tri open"></span>Details</button>
      <div class="details">
        <table>
          <thead><tr><th class="c44">Parameter</th><th class="c28">Value</th><th class="c48">Expression<i class="asc"></i></th><th></th></tr></thead>
          <tbody>${Array.from({ length: 21 }, () => html`<tr><td></td><td></td><td></td><td></td></tr>`)}</tbody>
        </table>
      </div>
      <button class="fold preview"><span class="tri"></span>Preview</button>`;
  }
}

@customElement("class-selection")
class ClassSelection extends LitElement {
  static styles = [base, css`
    :host { display: block; background: #323232; color: #e4e4e4; font-size: 6px; line-height: 8px; border: 1px solid #2a2a2a; border-top: 0; }
    header { display: flex; align-items: center; gap: 4px; height: 13px; background: #3c9db6; color: #f2fbfd; padding: 0 3px 0 2px; }
    h2 { font: inherit; margin: 0; flex: 1; }
    header button { font-size: 8px; font-weight: 700; width: 8px; }
    fieldset { border: 1px solid #2a2a2a; background: #454545; margin: 2px 3px 0 2px; padding: 0 3px; min-width: 0; }
    .head { justify-content: flex-start; gap: 4px; color: #5bbcc9; height: 9px; width: 100%; }
    .tri { width: 5px; height: 3px; background: #55c0cc; clip-path: polygon(0 0, 100% 0, 50% 100%); }
    .tri.shut { width: 3px; height: 5px; clip-path: polygon(0 0, 100% 50%, 0 100%); margin: 0 1px; }
    .row { display: flex; align-items: center; justify-content: space-between; height: 17px; }
    .row.low { height: 10px; }
    .objs { padding-top: 4px; }
    .main { flex: 1; height: 16px; background: #fbb015; color: #3c2c05; justify-content: flex-start; gap: 2px; }
    .sq { width: 16px; height: 16px; border: 1px solid #8b8b8b; background: #3a3a3a; }
    .sq.hot { background: #fbb015; color: #ffe9a8; border-color: #c9921f; }
    .sq.off { border-color: #606060; background: #424242; }
    .off { color: #858585; }
    .name { width: 41px; height: 12px; border: 1px solid #aaa; background: #3a3a3a; outline: 0; padding: 0 2px; }
    .chk { appearance: none; width: 7px; height: 7px; background: #fff; margin-right: 15px; }
    .gap { height: 1px; }
    .pad { height: 2px; }
    .more { margin: 1px 0 4px; width: 100%; height: 6px; border-bottom: 1px solid #262626; }
    .upc { border: 2px solid transparent; border-bottom: 3px solid #eee; border-top: 0; }
    .acts { display: flex; justify-content: flex-end; gap: 3px; padding: 0 7px 4px; }
    .acts button { width: 33px; height: 12px; border: 1px solid #3d7f90; color: #5aa9b9; }
    .acts .ok { background: #42b1cd; border-color: #42b1cd; color: #e9fbff; }
  `];
  render() {
    return html`
      <header>${icon("cog", 16, "i8")}<h2>Class Selection</h2><button aria-label="Help">?</button><button aria-label="Close">${icon("close", 16, "i8")}</button></header>
      <fieldset>
        <button class="head"><span class="tri"></span>Objects</button>
        <div class="objs">
          <div class="row"><button class="main"><svg class="i8" viewBox="0 0 10 10"><path d="m1 5 3 3 5-6" stroke="#7fd322" stroke-width="2" fill="none"/></svg>Select Objects (1)</button><button class="sq hot" aria-label="Select Objects">${icon("cross", 16, "i14")}</button></div>
          <div class="row"><span>Select All</span><button class="sq" aria-label="Select All">${icon("crossall", 16, "i14")}</button></div>
          <div class="row"><span>Invert Selection</span><button class="sq" aria-label="Invert Selection">${icon("crossinv", 16, "i14")}</button></div>
        </div>
        <div class="pad"></div>
      </fieldset>
      <fieldset>
        <button class="head"><span class="tri"></span>Other Selection Methods</button>
        <div class="gap"></div>
        <div class="row"><label for="nm">Select by Name</label><input class="name" id="nm" type="text" value="|"></div>
        <div class="row low off"><label for="ch">Select Chain</label><input class="chk" id="ch" type="checkbox"></div>
        <div class="row off"><span>Up One Level</span><button class="sq off" disabled aria-label="Up One Level">${icon("uplevel", 16, "i14")}</button></div>
        <div class="pad"></div>
      </fieldset>
      <fieldset><button class="head"><span class="tri shut"></span>Filters</button></fieldset>
      <button class="more" aria-label="Show less"><span class="upc"></span></button>
      <div class="acts"><button class="ok">OK</button><button>Cancel</button></div>`;
  }
}

@customElement("model-scene")
class ModelScene extends LitElement {
  static styles = css`
    :host { display: block; min-height: 0; overflow: hidden;
      background: linear-gradient(#1f2425 0%, #2f3232 22%, #3d3f3f 42%, #4a4c4d 56%, #545356 64%, #575759 100%); }
    svg { display: block; width: 100%; height: 100%; }
  `;
  render() {
    return html`<svg viewBox="203 134 1075 571" preserveAspectRatio="xMidYMid slice" role="img" aria-label="Model view">
      <defs>
        <linearGradient id="o" gradientUnits="userSpaceOnUse" x1="380" y1="330" x2="560" y2="360">
          <stop offset="0" stop-color="#e2903f"/><stop offset=".6" stop-color="#f69840"/><stop offset="1" stop-color="#fb9f45"/>
        </linearGradient>
        <linearGradient id="g" gradientUnits="userSpaceOnUse" x1="600" y1="290" x2="700" y2="430">
          <stop offset="0" stop-color="#f9b34d" stop-opacity="0"/><stop offset="1" stop-color="#f9b34d" stop-opacity=".9"/>
        </linearGradient>
        <linearGradient id="b" gradientUnits="userSpaceOnUse" x1="800" y1="430" x2="975" y2="470">
          <stop offset="0" stop-color="#9bb3c0"/><stop offset=".45" stop-color="#90a5b1"/><stop offset="1" stop-color="#98aab1"/>
        </linearGradient>
      </defs>
      <path d="M939 280.500Q967 419 975 548Q905 619 821 665Q811 545 779 454.500Q851 359 939 280.500z" fill="url(#b)" stroke="#26313a" stroke-width=".6"/>
      <path id="top" d="M417 280.500Q652 201 939 280.500Q851 359 779 454.500Q543 378 359 450Q361 351 417 280.500z" fill="url(#o)" stroke="#3a2c1c" stroke-width=".6"/>
      <path d="M417 280.500Q652 201 939 280.500Q851 359 779 454.500Q543 378 359 450Q361 351 417 280.500z" fill="url(#g)"/>
      <path d="M779 454.500Q851 359 939 280.500" fill="none" stroke="#c9a648" stroke-width="1.600"/>
      <path d="M779 454.500Q851 359 939 280.500" fill="none" stroke="#fff530" stroke-width="2.200" stroke-dasharray="5 2.500"/>
      <circle cx="779" cy="454.500" r="2.800" fill="#fff200"/><circle cx="938.500" cy="280.500" r="2.800" fill="#fff200"/>
      <g fill="none" stroke="#a2707f" stroke-width=".8">
        <path d="M620 578v37M616 612h44M620 591h20v20M626 595v12h18M620 612l12-13M629 598l2 2 2-3M641 612l4-5M621 591l4-5M662 610l4 4M666 610l-4 4"/>
        <path d="m653 610 7 2-7 1z" fill="#c07f90"/>
      </g>
      <circle cx="624.500" cy="562.500" r="12.500" fill="none" stroke="#2b2b2b" stroke-width="3" stroke-dasharray="14 5.630" stroke-dashoffset="-2.800"/>
      <circle cx="624.500" cy="562.500" r="12.500" fill="none" stroke="#eee" stroke-width="1.500" stroke-dasharray="13 6.630" stroke-dashoffset="-3.300"/>
      <path d="M624.500 545v35M607 562.500h35" stroke="#1c1c1c" stroke-width="3.600"/>
      <path d="M624.500 546v33M608 562.500h33" stroke="#fff" stroke-width="1.200"/>
      <path d="M243 642h21v20h-21zM243 642l6-6h20l-5 6M269 636v20l-5 6" fill="none" stroke="#c4c4c4" stroke-width=".9"/>
      <path d="M255 639v-15" stroke="#1c34c8" stroke-width="3"/><path d="m252 625 3-10 3 10z" fill="#1c34e0"/>
      <path d="M253 608h3l-3 3h3" fill="none" stroke="#3443b8" stroke-width=".8"/>
      <path d="M267 650h14" stroke="#cc2031" stroke-width="2"/><path d="m280 647 10 3-10 3z" fill="#dc1f30"/>
      <path d="m294 648 3 4M297 648l-3 4" stroke="#b2303c" stroke-width=".8"/>
    </svg>`;
  }
}

@customElement("app-root")
class AppRoot extends LitElement {
  static styles = [base, css`
    :host { box-sizing: border-box; display: flex; flex-direction: column; height: 100vh; overflow: hidden; padding: 0 2px 3px; background: linear-gradient(90deg, #096f8b, #12829f); font-family: "Open Sans", "Noto Sans", sans-serif; font-size: 6px; line-height: 8px; }
    .work { flex: 1; min-height: 0; display: grid; grid-template-columns: 23px 150px 28px 1fr; background: #323232; }
    .rail { background: #464646; display: flex; flex-direction: column; align-items: center; }
    .rail button { width: 100%; height: 26px; }
    .rail button.small { height: 15px; }
    .rail button.on { background: #303030; }
    .tools { background: #323232; display: flex; flex-direction: column; align-items: flex-end; padding: 6px 5px 5px; gap: 4px; border-left: 1px solid #282828; }
    .tools button { background: #2c2c2c; }
    .dot { margin-top: auto; width: 2px; height: 2px; background: #ddd; margin-right: 12px; }
    .stage { display: grid; grid-template-rows: 13px 1fr; min-width: 0; min-height: 0; position: relative; }
    .docs { border-bottom: 1px solid #4f98a4; }
    .doc { background: #2b93ad; color: #eef9fb; height: 12px; width: 61px; gap: 3px; }
    class-selection { position: absolute; left: 0; top: 12px; width: 148px; }
    footer { display: grid; grid-template-columns: 51fr auto 49fr; align-items: center; height: 12px; padding: 0 2px; background: #303030; color: #fff; font-size: 5px; font-weight: 700; }
  `];
  render() {
    const rail = ["gear", "asm", "constraint", "part", "reuse", "view", "mbd", "info", "globe", "clock", "tools", "palette"];
    return html`
      <title-bar></title-bar>
      <ribbon-panel></ribbon-panel>
      <selection-bar></selection-bar>
      <main class="work">
        <nav class="rail">${rail.map((n, i) => html`<button aria-label=${n} class=${classMap({ small: i === 0, on: n === "part" })}>${icon(n, 16, i ? "i16" : "i10")}</button>`)}</nav>
        <part-navigator></part-navigator>
        <div class="tools"><button aria-label="Record">${icon("record")}</button><button aria-label="Refresh">${icon("refresh")}</button><span class="dot"></span></div>
        <section class="stage">
          <div class="docs"><button class="doc">${icon("part", 16, "i8")}model1.prt
            <svg class="i8" viewBox="0 0 10 10"><path d="M7 1H2v8h5V7M5 5h4M7 3l2 2-2 2" fill="none" stroke="#e6f6fa"/></svg></button></div>
          <model-scene></model-scene>
          <class-selection></class-selection>
        </section>
      </main>
      <footer><span>Select Objects to Display Information</span><span>Untrim(6) selected</span><span></span></footer>`;
  }
}
